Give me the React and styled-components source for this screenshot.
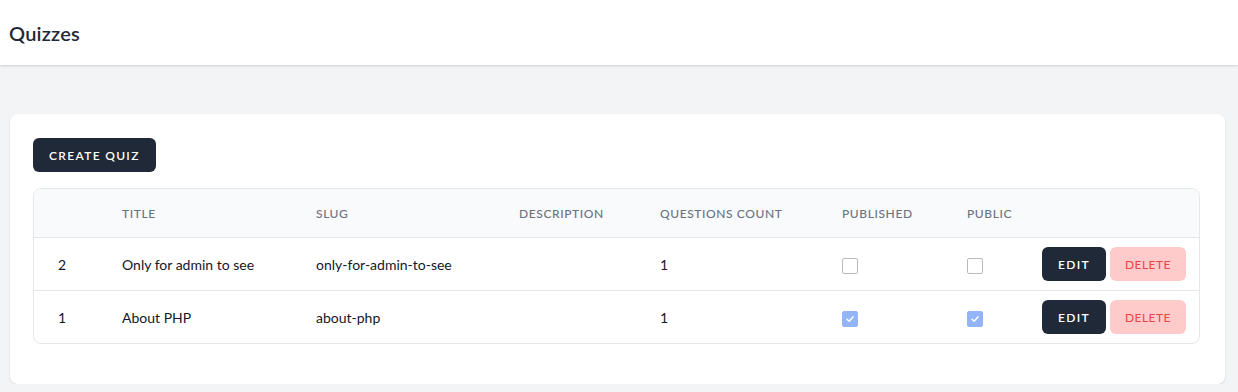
import React from "react";
import styled, { createGlobalStyle } from "styled-components";

const Global = createGlobalStyle`
  html, body { margin: 0; padding: 0; }
  body {
    background: #f3f4f6;
    font-family: Lato, "Noto Sans", sans-serif;
    color: #111827;
    -webkit-font-smoothing: antialiased;
  }
`;

const Header = styled.header`
  height: 65px;
  background: #fff;
  box-shadow: 0 1px 3px rgba(0,0,0,0.1), 0 1px 2px rgba(0,0,0,0.06);
  display: flex;
  align-items: center;
  padding-left: 9px;
`;

const Title = styled.h2`
  margin: 0;
  font-size: 20px;
  font-weight: 600;
  color: #1f2937;
  line-height: 28px;
  letter-spacing: 0.01em;
`;

const Main = styled.main`
  padding: 49px 13px 0 10px;
`;

const Card = styled.section`
  background: #fff;
  border-radius: 8px;
  box-shadow: 0 1px 3px rgba(0,0,0,0.08), 0 1px 2px rgba(0,0,0,0.04);
  padding: 24px 25px 40px 23px;
  display: flex;
  flex-direction: column;
  gap: 16px;
  align-items: flex-start;
`;

const Button = styled.button`
  height: 34px;
  padding: 0 ${p => p.$px || 16}px;
  border: none;
  border-radius: 6px;
  background: ${p => (p.$danger ? "#fecaca" : "#1f2937")};
  color: ${p => (p.$danger ? "#ef4444" : "#fff")};
  font-family: inherit;
  font-size: 12px;
  font-weight: ${p => (p.$danger ? 400 : 600)};
  letter-spacing: ${p => (p.$danger ? "0.04em" : "0.11em")};
  text-transform: uppercase;
  cursor: pointer;
  flex-shrink: 0;
`;

const TableWrap = styled.div`
  width: 100%;
  border: 1px solid #e5e7eb;
  border-radius: 8px;
  overflow: hidden;
  box-sizing: border-box;
`;

const Table = styled.table`
  width: 100%;
  border-collapse: collapse;
  table-layout: fixed;
`;

const Th = styled.th`
  height: 48px;
  background: #f9fafb;
  padding: 0 24px;
  text-align: left;
  font-size: 12px;
  font-weight: 500;
  color: #6b7280;
  letter-spacing: 0.05em;
  text-transform: uppercase;
  white-space: nowrap;
`;

const Tr = styled.tr`
  border-top: 1px solid #e5e7eb;
`;

const Td = styled.td`
  height: 52px;
  padding: 0 ${p => (p.$tight ? 12 : 24)}px 0 24px;
  font-size: 14px;
  color: #111827;
  white-space: nowrap;
  vertical-align: middle;
`;

const Box = styled.span`
  display: inline-flex;
  align-items: center;
  justify-content: center;
  width: 16px;
  height: 16px;
  box-sizing: border-box;
  border-radius: 2px;
  border: 1px solid ${p => (p.$checked ? "#93b4f7" : "#b8bcc2")};
  background: ${p => (p.$checked ? "#93b4f7" : "#fff")};
  vertical-align: middle;
  margin-top: 2px;
`;

const Actions = styled.div`
  display: flex;
  gap: 4px;
`;

const Checkbox = ({ checked }) => (
  <Box $checked={checked}>
    {checked && (
      <svg width="12" height="12" viewBox="0 0 16 16">
        <path d="M4 8.3 L6.8 11 L12 5.2" fill="none" stroke="#fff" strokeWidth="2" strokeLinecap="round" strokeLinejoin="round" />
      </svg>
    )}
  </Box>
);

const quizzes = [
  { id: 2, title: "Only for admin to see", slug: "only-for-admin-to-see", description: "", count: 1, published: false, isPublic: false },
  { id: 1, title: "About PHP", slug: "about-php", description: "", count: 1, published: true, isPublic: true },
];

const widths = [64, 194, 203, 141, 182, 125, 75, 181];
const headers = ["", "Title", "Slug", "Description", "Questions count", "Published", "Public", ""];

export default function App() {
  return (
    <>
      <Global />
      <Header>
        <Title>Quizzes</Title>
      </Header>
      <Main>
        <Card>
          <Button $px={16}>Create quiz</Button>
          <TableWrap>
            <Table>
              <colgroup>
                {widths.map((w, i) => (
                  <col key={i} style={{ width: w }} />
                ))}
              </colgroup>
              <thead>
                <tr>
                  {headers.map((h, i) => (
                    <Th key={i}>{h}</Th>
                  ))}
                </tr>
              </thead>
              <tbody>
                {quizzes.map(q => (
                  <Tr key={q.id}>
                    <Td>{q.id}</Td>
                    <Td>{q.title}</Td>
                    <Td>{q.slug}</Td>
                    <Td>{q.description}</Td>
                    <Td>{q.count}</Td>
                    <Td><Checkbox checked={q.published} /></Td>
                    <Td><Checkbox checked={q.isPublic} /></Td>
                    <Td $tight>
                      <Actions>
                        <Button $px={16}>Edit</Button>
                        <Button $danger $px={15}>Delete</Button>
                      </Actions>
                    </Td>
                  </Tr>
                ))}
              </tbody>
            </Table>
          </TableWrap>
        </Card>
      </Main>
    </>
  );
}
